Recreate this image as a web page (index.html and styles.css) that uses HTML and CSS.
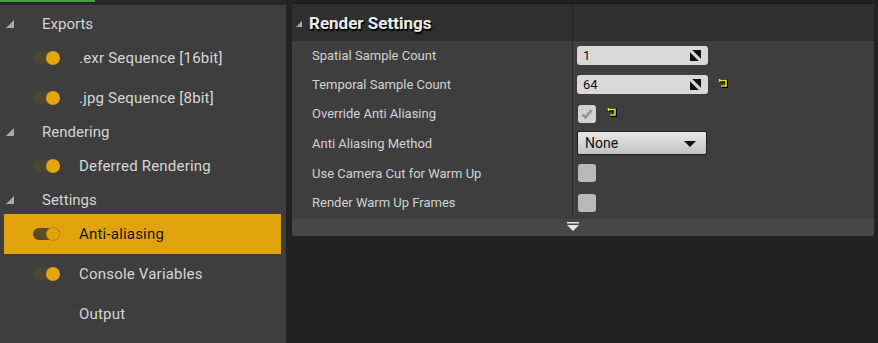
FILE: index.html
```html
<!DOCTYPE html>
<html lang="en">
  <head>
    <meta charset="UTF-8" />
    <title>Movie Render Settings</title>
    <link rel="stylesheet" href="styles.css">
  </head>
  <body>
    <div class="editor">
      <aside class="sidebar">
        <div class="tab-strip"><span class="tab-active"></span></div>
        <div class="sidebar-list">
          <div class="cat"><span class="cat-arrow"></span>Exports</div>
          <div class="item"><span class="toggle"></span>.exr Sequence [16bit]</div>
          <div class="item"><span class="toggle"></span>.jpg Sequence [8bit]</div>
          <div class="cat"><span class="cat-arrow"></span>Rendering</div>
          <div class="item"><span class="toggle"></span>Deferred Rendering</div>
          <div class="cat"><span class="cat-arrow"></span>Settings</div>
          <div class="item selected"><span class="toggle"></span>Anti-aliasing</div>
          <div class="item"><span class="toggle"></span>Console Variables</div>
          <div class="item"><span class="toggle none"></span>Output</div>
        </div>
      </aside>

      <main class="workspace">
        <section class="details">
          <div class="details-head">
            <div class="head-name"><span class="cat-arrow"></span>Render Settings</div>
            <div class="head-value"></div>
          </div>

          <div class="props">
            <div class="prop-row h29">
              <div class="prop-name">Spatial Sample Count</div>
              <div class="prop-value">
                <div class="num-box">1
                  <svg class="drag-icon" viewBox="0 0 11 11"><path d="M2.2 0H11V8.8Z M0 2.2V11H8.8Z" fill="#111"/></svg>
                </div>
              </div>
            </div>
            <div class="prop-row h29">
              <div class="prop-name">Temporal Sample Count</div>
              <div class="prop-value">
                <div class="num-box">64
                  <svg class="drag-icon" viewBox="0 0 11 11"><path d="M2.2 0H11V8.8Z M0 2.2V11H8.8Z" fill="#111"/></svg>
                </div>
                <svg class="reset" viewBox="0 0 10 10"><path d="M1.5 1V4 M1.5 2.5H8V8H3" stroke="#000" stroke-width="3" fill="none" transform="translate(0.6 0.6)"/><path d="M1.5 1V4 M1.5 2.5H8V8H3" stroke="#e4e414" stroke-width="1.6" fill="none"/></svg>
              </div>
            </div>
            <div class="prop-row h29">
              <div class="prop-name">Override Anti Aliasing</div>
              <div class="prop-value">
                <div class="check on">
                  <svg viewBox="0 0 18 18"><path d="M4.5 9.5L7.5 12.5L13.5 5" stroke="#959595" stroke-width="2.8" fill="none"/></svg>
                </div>
                <svg class="reset near" viewBox="0 0 10 10"><path d="M1.5 1V4 M1.5 2.5H8V8H3" stroke="#000" stroke-width="3" fill="none" transform="translate(0.6 0.6)"/><path d="M1.5 1V4 M1.5 2.5H8V8H3" stroke="#e4e414" stroke-width="1.6" fill="none"/></svg>
              </div>
            </div>
            <div class="prop-row h30">
              <div class="prop-name">Anti Aliasing Method</div>
              <div class="prop-value">
                <div class="combo">None<span class="combo-arrow"></span></div>
              </div>
            </div>
            <div class="prop-row h30">
              <div class="prop-name">Use Camera Cut for Warm Up</div>
              <div class="prop-value"><div class="check"></div></div>
            </div>
            <div class="prop-row h29">
              <div class="prop-name">Render Warm Up Frames</div>
              <div class="prop-value"><div class="check"></div></div>
            </div>
          </div>

          <div class="details-foot">
            <svg viewBox="0 0 12 9" class="more"><path d="M0 0H12V1.5H0Z M0 3H12L6 9Z" fill="#e6e6e6"/></svg>
          </div>
        </section>
      </main>
    </div>
  </body>
</html>
```

FILE: styles.css
```css
body {
  margin: 0;
  background: #222222;
  font-family: Roboto, "Liberation Sans", sans-serif;
  overflow: hidden;
}
.editor {
  display: flex;
  height: 343px;
  gap: 6px;
}
.sidebar {
  width: 286px;
  display: flex;
  flex-direction: column;
  background: #262626;
}
.tab-strip {
  height: 5px;
  background: #262626;
}
.tab-active {
  display: block;
  width: 95px;
  height: 2px;
  background: #45a045;
}
.sidebar-list {
  flex: 1;
  background: #3e3e3e;
  padding-top: 5px;
}
.cat {
  height: 28px;
  display: flex;
  align-items: center;
  padding-left: 6px;
  font-size: 15px;
  color: #d4d4d4;
}
.cat-arrow {
  width: 0;
  height: 0;
  border-left: 8px solid transparent;
  border-bottom: 8px solid #a9a9a9;
  margin-right: 28px;
  margin-top: -1px;
}
.item {
  height: 40px;
  display: flex;
  align-items: center;
  padding-left: 33px;
  font-size: 15px;
  letter-spacing: 0.2px;
  color: #d6d6d6;
}
.item.selected {
  background: #e1a30b;
  color: #161616;
  margin: 0 5px 0 4px;
  padding-left: 29px;
}
.toggle {
  position: relative;
  width: 27px;
  height: 12px;
  border-radius: 6px;
  background: #4d4535;
  margin-right: 19px;
}
.toggle::after {
  content: "";
  position: absolute;
  right: 0;
  top: -1px;
  width: 14px;
  height: 14px;
  border-radius: 50%;
  background: #e2a60b;
}
.selected .toggle {
  background: #5a4b2a;
}
.selected .toggle::after {
  box-sizing: border-box;
  border: 1px solid #b98c12;
  background: #e1a30b;
}
.toggle.none {
  visibility: hidden;
}

.workspace {
  flex: 1;
  padding-top: 4px;
}
.details {
  width: 582px;
  background: #3e3e3e;
  border-radius: 0 0 3px 3px;
  box-shadow: 0 -1px 0 #1c1c1c;
}
.details-head {
  height: 37px;
  display: flex;
  background: #2f2f2f;
}
.head-name {
  width: 280px;
  display: flex;
  align-items: center;
  padding-left: 4px;
  box-sizing: border-box;
  font-size: 17px;
  font-weight: bold;
  color: #ececec;
  text-shadow: 1px 1px 0 #000, 1px 2px 1px #000;
}
.head-name .cat-arrow {
  border-left-width: 6px;
  border-bottom-width: 6px;
  margin-right: 7px;
  margin-top: 2px;
}
.head-value {
  flex: 1;
  border-left: 1px solid #242424;
}
.props {
  padding-bottom: 2px;
}
.prop-row {
  display: flex;
}
.h29 { height: 29px; }
.h30 { height: 30px; }
.prop-name {
  width: 280px;
  box-sizing: border-box;
  padding-left: 20px;
  display: flex;
  align-items: center;
  font-size: 13px;
  color: #d2d2d2;
}
.prop-value {
  flex: 1;
  border-left: 1px solid #2a2a2a;
  display: flex;
  align-items: center;
  padding-left: 4px;
}
.num-box {
  position: relative;
  width: 131px;
  height: 19px;
  box-sizing: border-box;
  border-radius: 3px;
  background: #d9d9d9;
  font-size: 13px;
  color: #111;
  line-height: 19px;
  padding-left: 6px;
}
.drag-icon {
  position: absolute;
  right: 7px;
  top: 4px;
  width: 11px;
  height: 11px;
}
.reset {
  width: 10px;
  height: 10px;
  margin-left: 10px;
  margin-top: -4px;
}
.reset.near {
  margin-left: 11px;
}
.check {
  width: 18px;
  height: 18px;
  border-radius: 3px;
  background: #b9b9b9;
  margin-left: 1px;
}
.check.on {
  background: #d2d2d2;
}
.check svg {
  width: 18px;
  height: 18px;
  display: block;
}
.combo {
  position: relative;
  width: 130px;
  height: 24px;
  box-sizing: border-box;
  border: 1px solid #1d1d1d;
  border-radius: 2px;
  background: linear-gradient(#e8e8e8, #c2c2c2);
  font-size: 14px;
  color: #111;
  line-height: 22px;
  padding-left: 7px;
}
.combo-arrow {
  position: absolute;
  right: 10px;
  top: 9px;
  border-left: 6px solid transparent;
  border-right: 6px solid transparent;
  border-top: 6px solid #111;
}
.details-foot {
  height: 17px;
  background: #474747;
  border-radius: 0 0 3px 3px;
  display: flex;
}
.more {
  width: 12px;
  height: 9px;
  margin-top: 3px;
  margin-left: 275px;
}
```
